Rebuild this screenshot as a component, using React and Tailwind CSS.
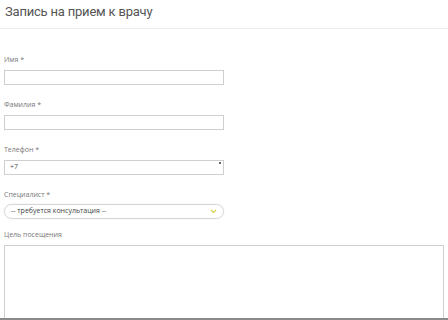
export default function App() {
  const labelCls = 'block h-[10px] leading-[10px] text-[7px] text-[#777]';
  const inputCls = 'block w-[220px] h-[15px] border border-[#cfcfcf] bg-white';

  return (
    <div className="w-[448px] h-[320px] bg-white overflow-hidden font-['Open_Sans',sans-serif] border-b-2 border-[#8a8a8a]">
      {/* Header */}
      <div className="h-[29px] border-b border-[#ececec] px-[5px] pt-[2px]">
        <h1 className="font-['Roboto',sans-serif] text-[13px] tracking-[-0.2px] leading-[20px] text-[#555]">Запись на прием к врачу</h1>
      </div>

      <form className="px-[4px] pt-[26px]">
        <div className="mb-[15px]">
          <label className={labelCls}>Имя *</label>
          <div className={`${inputCls} mt-[5px]`} />
        </div>

        <div className="mb-[15px]">
          <label className={labelCls}>Фамилия *</label>
          <div className={`${inputCls} mt-[5px]`} />
        </div>

        <div className="mb-[15px]">
          <label className={labelCls}>Телефон *</label>
          <div className={`${inputCls} mt-[5px] relative flex items-center px-[5px]`}>
            <span className="text-[7px] text-[#555]">+7</span>
            <span className="absolute right-[2px] top-[1px] w-[2px] h-[2px] rounded-full bg-[#333]" />
          </div>
        </div>

        <div className="mb-[11px]">
          <label className={labelCls}>Специалист *</label>
          <div className="mt-[4px] w-[220px] h-[15px] border border-[#d6d6d6] rounded-full flex items-center justify-between px-[6px] shadow-[0_0_2px_rgba(0,0,0,0.08)]">
            <span className="text-[7px] text-[#444]">-- требуется консультация --</span>
            <svg width="7" height="5" viewBox="0 0 7 5" fill="none">
              <path d="M1 1l2.5 2.5L6 1" stroke="#d8cf4a" strokeWidth="1.2" />
            </svg>
          </div>
        </div>

        <div>
          <label className={labelCls}>Цель посещения</label>
          <div className="mt-[5px] w-[440px] h-[90px] border border-[#d0d0d0] bg-white" />
        </div>
      </form>
    </div>
  );
}
